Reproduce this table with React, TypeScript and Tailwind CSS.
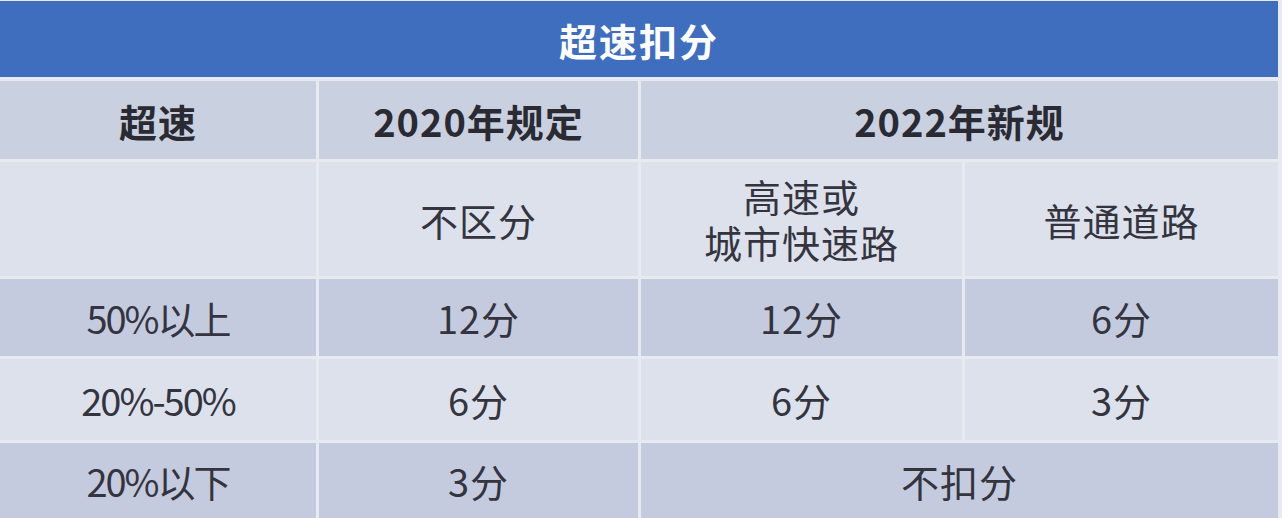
import React from "react";

const font = { fontFamily: '"Noto Sans CJK SC", "Noto Sans", sans-serif' };

function Cell({ children, className = "" }: { children: React.ReactNode; className?: string }) {
  return (
    <div className={`flex items-center justify-center text-center ${className}`}>{children}</div>
  );
}

export default function App() {
  const dark = "bg-[#c4cbde]";
  const light = "bg-[#dce1ec]";
  const body = "text-[38px] tracking-[1px] text-[#34343e] leading-[47px]";
  const pct = "text-[38px] tracking-[-2px] text-[#34343e] leading-[47px]";
  const head = "text-[38px] tracking-[1px] font-bold text-[#2a2a33]";
  return (
    <div style={font} className="w-[1282px] h-[518px] overflow-hidden bg-[#e7eaf1] pt-[1px] pr-[4px]">
      <div className="grid grid-cols-[316px_319px_321px_1fr] grid-rows-[77px_78px_114px_77px_81px_1fr] gap-x-[3px] gap-y-[3px] h-full">
        <Cell className="col-span-4 bg-[#3f6ebf] text-white text-[38px] font-bold tracking-[2px] mb-[1px]">
          超速扣分
        </Cell>
        <Cell className={`bg-[#c9d0e0] ${head}`}>超速</Cell>
        <Cell className={`bg-[#c9d0e0] ${head}`}>2020年规定</Cell>
        <Cell className={`col-span-2 bg-[#c9d0e0] ${head}`}>2022年新规</Cell>

        <Cell className={light}> </Cell>
        <Cell className={`${light} ${body}`}>不区分</Cell>
        <Cell className={`${light} ${body} flex-col`}>
          <span className="block h-[46px] leading-[46px]">高速或</span>
          <span className="block h-[46px] leading-[46px]">城市快速路</span>
        </Cell>
        <Cell className={`${light} ${body}`}>普通道路</Cell>

        <Cell className={`${dark} ${pct}`}>50%以上</Cell>
        <Cell className={`${dark} ${body}`}>12分</Cell>
        <Cell className={`${dark} ${body}`}>12分</Cell>
        <Cell className={`${dark} ${body}`}>6分</Cell>

        <Cell className={`${light} ${pct}`}>20%-50%</Cell>
        <Cell className={`${light} ${body}`}>6分</Cell>
        <Cell className={`${light} ${body}`}>6分</Cell>
        <Cell className={`${light} ${body}`}>3分</Cell>

        <Cell className={`${dark} ${pct}`}>20%以下</Cell>
        <Cell className={`${dark} ${body}`}>3分</Cell>
        <Cell className={`col-span-2 ${dark} ${body}`}>不扣分</Cell>
      </div>
    </div>
  );
}
